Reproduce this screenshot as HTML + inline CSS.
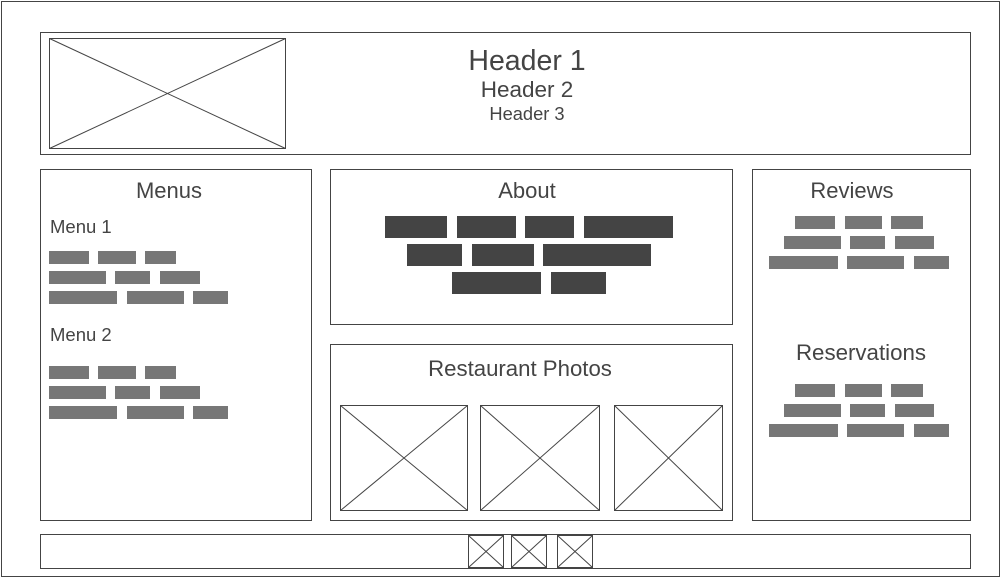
<!DOCTYPE html>
<html><head><meta charset="utf-8"><style>
html,body{margin:0;padding:0;background:#fff;width:1003px;height:579px;overflow:hidden}
svg{display:block}
text{font-family:"Liberation Sans",sans-serif;fill:#444}
</style></head><body>
<svg width="1003" height="579" viewBox="0 0 1003 579" xmlns="http://www.w3.org/2000/svg">
<g fill="none" stroke="#444" stroke-width="1">
<rect x="1.5" y="1.5" width="998" height="575"/>
<rect x="40.5" y="32.5" width="930" height="122"/>
<rect x="49.5" y="38.5" width="236" height="110"/>
<path d="M49.5 38.5L285.5 148.5M285.5 38.5L49.5 148.5"/>
<rect x="40.5" y="169.5" width="271" height="351"/>
<rect x="330.5" y="169.5" width="402" height="155"/>
<rect x="330.5" y="344.5" width="402" height="176"/>
<rect x="752.5" y="169.5" width="218" height="351"/>
<rect x="40.5" y="534.5" width="930" height="34"/>
<rect x="340.5" y="405.5" width="127" height="105"/><path d="M340.5 405.5L467.5 510.5M467.5 405.5L340.5 510.5"/>
<rect x="480.5" y="405.5" width="119" height="105"/><path d="M480.5 405.5L599.5 510.5M599.5 405.5L480.5 510.5"/>
<rect x="614.5" y="405.5" width="108" height="105"/><path d="M614.5 405.5L722.5 510.5M722.5 405.5L614.5 510.5"/>
<rect x="468.5" y="535.5" width="35" height="32"/><path d="M468.5 535.5L503.5 567.5M503.5 535.5L468.5 567.5"/>
<rect x="511.5" y="535.5" width="35" height="32"/><path d="M511.5 535.5L546.5 567.5M546.5 535.5L511.5 567.5"/>
<rect x="557.5" y="535.5" width="35" height="32"/><path d="M557.5 535.5L592.5 567.5M592.5 535.5L557.5 567.5"/>
</g>
<text x="527" y="70" font-size="28.5" text-anchor="middle">Header 1</text>
<text x="527" y="97" font-size="22.5" text-anchor="middle">Header 2</text>
<text x="527" y="120" font-size="18.3" text-anchor="middle">Header 3</text>
<text x="169" y="198" font-size="22" text-anchor="middle">Menus</text>
<text x="50" y="233" font-size="18.5">Menu 1</text>
<text x="50" y="341" font-size="18.5">Menu 2</text>
<text x="527" y="198" font-size="22" text-anchor="middle">About</text>
<text x="520" y="376" font-size="22.2" text-anchor="middle">Restaurant Photos</text>
<text x="852" y="198" font-size="22" text-anchor="middle">Reviews</text>
<text x="861" y="360" font-size="22.3" text-anchor="middle">Reservations</text>
<g fill="#777">
<rect x="49" y="251" width="40" height="13"/><rect x="98" y="251" width="38" height="13"/><rect x="145" y="251" width="31" height="13"/>
<rect x="49" y="271" width="57" height="13"/><rect x="115" y="271" width="35" height="13"/><rect x="160" y="271" width="40" height="13"/>
<rect x="49" y="291" width="68" height="13"/><rect x="127" y="291" width="57" height="13"/><rect x="193" y="291" width="35" height="13"/>
<rect x="49" y="366" width="40" height="13"/><rect x="98" y="366" width="38" height="13"/><rect x="145" y="366" width="31" height="13"/>
<rect x="49" y="386" width="57" height="13"/><rect x="115" y="386" width="35" height="13"/><rect x="160" y="386" width="40" height="13"/>
<rect x="49" y="406" width="68" height="13"/><rect x="127" y="406" width="57" height="13"/><rect x="193" y="406" width="35" height="13"/>
<rect x="795" y="216" width="40" height="13"/><rect x="845" y="216" width="37" height="13"/><rect x="891" y="216" width="32" height="13"/>
<rect x="784" y="236" width="57" height="13"/><rect x="850" y="236" width="35" height="13"/><rect x="895" y="236" width="39" height="13"/>
<rect x="769" y="256" width="69" height="13"/><rect x="847" y="256" width="57" height="13"/><rect x="914" y="256" width="35" height="13"/>
<rect x="795" y="384" width="40" height="13"/><rect x="845" y="384" width="37" height="13"/><rect x="891" y="384" width="32" height="13"/>
<rect x="784" y="404" width="57" height="13"/><rect x="850" y="404" width="35" height="13"/><rect x="895" y="404" width="39" height="13"/>
<rect x="769" y="424" width="69" height="13"/><rect x="847" y="424" width="57" height="13"/><rect x="914" y="424" width="35" height="13"/>
</g>
<g fill="#444">
<rect x="385" y="216" width="62" height="22"/><rect x="457" y="216" width="59" height="22"/><rect x="525" y="216" width="49" height="22"/><rect x="584" y="216" width="89" height="22"/>
<rect x="407" y="244" width="55" height="22"/><rect x="472" y="244" width="62" height="22"/><rect x="543" y="244" width="108" height="22"/>
<rect x="452" y="272" width="89" height="22"/><rect x="551" y="272" width="55" height="22"/>
</g>
</svg>
</body></html>
